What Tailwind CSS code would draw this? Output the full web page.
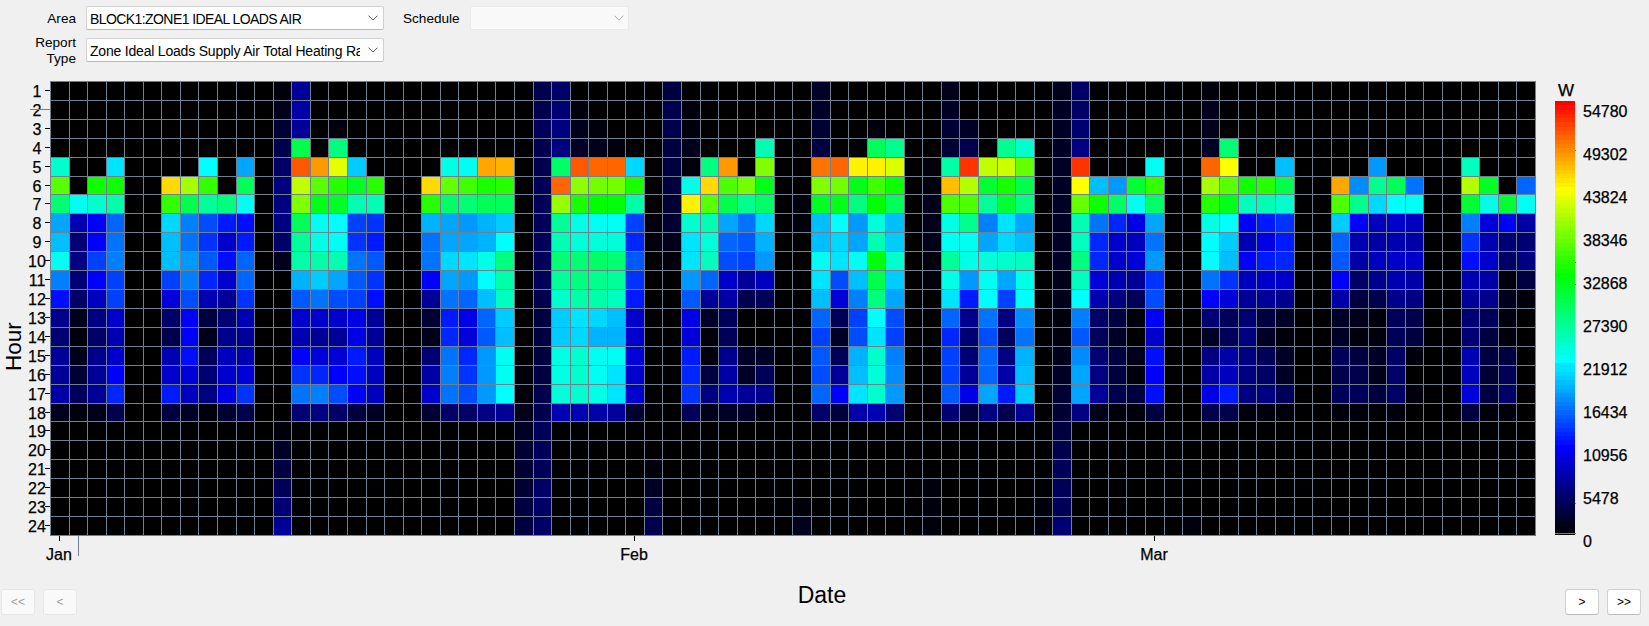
<!DOCTYPE html>
<html lang="en">
<head>
    <meta charset="UTF-8">
    <meta name="viewport" content="width=device-width, initial-scale=1.0">
    <title>Hourly Heating Rate</title>
    <script src="https://cdn.jsdelivr.net/npm/@tailwindcss/browser@4"></script>
    <style>
        body {
            font-family: "Liberation Sans", Arial, sans-serif;
        }
    </style>
</head>
<body class="bg-[#f0f0f0] text-black w-[1649px] h-[626px] overflow-hidden flex flex-col">

    <!-- Filters -->
    <header class="h-[81px] shrink-0 flex items-start pt-[6px] text-[13.6px] leading-[16px]">
        <div class="w-[76px] text-right flex flex-col">
            <label class="h-6 leading-[25px]">Area</label>
            <label class="mt-[5px] pl-[30px]">Report Type</label>
        </div>
        <div class="ml-[10px] w-[298px] flex flex-col gap-2">
            <div class="h-6 bg-white border border-[#d0d0d0] border-b-[#b8b8b8] rounded-[2px] flex items-center pl-[3px] pr-[5px]">
                <span class="flex-1 pt-px overflow-hidden whitespace-nowrap text-[14px] tracking-[-0.58px]">BLOCK1:ZONE1 IDEAL LOADS AIR</span>
                <svg class="w-[10px] h-[6px]" viewBox="0 0 10 6" fill="none" stroke="#555" stroke-width="1"><path d="M0.6 0.7 5 5.1 9.4 0.7"/></svg>
            </div>
            <div class="h-6 bg-white border border-[#d0d0d0] border-b-[#b8b8b8] rounded-[2px] flex items-center pl-[3px] pr-[5px]">
                <span class="w-[270px] pt-px overflow-hidden whitespace-nowrap text-[14px] tracking-[-0.2px]">Zone Ideal Loads Supply Air Total Heating Rate</span>
                <svg class="ml-auto w-[10px] h-[6px] shrink-0" viewBox="0 0 10 6" fill="none" stroke="#555" stroke-width="1"><path d="M0.6 0.7 5 5.1 9.4 0.7"/></svg>
            </div>
        </div>
        <label class="ml-[19px] w-[67px] h-6 leading-[25px]">Schedule</label>
        <div class="w-[159px] h-6 bg-[#f9f9f9] border border-[#e9e9e9] rounded-[2px] flex items-center justify-end pr-[4px]">
            <svg class="w-[10px] h-[6px]" viewBox="0 0 10 6" fill="none" stroke="#aaa" stroke-width="1"><path d="M0.6 0.7 5 5.1 9.4 0.7"/></svg>
        </div>
    </header>

    <!-- Chart -->
    <main class="h-[455px] shrink-0 flex">
        <div class="w-[27px] flex items-start justify-center pt-[240px]">
            <span class="[writing-mode:vertical-rl] rotate-180 text-[22.5px] leading-[25px] h-[50px]">Hour</span>
        </div>
        <div id="hours" class="relative w-[23px] grid text-[16px] leading-none [-webkit-text-stroke:0.25px_black]"></div>
        <div id="heatmap" class="w-[1486px] grid border-r border-b border-[#708090] bg-black"></div>
        <div class="relative ml-[19px] w-5 pt-5">
            <div class="absolute top-0 left-0 w-[22px] text-center text-[17px] leading-5 [-webkit-text-stroke:0.25px_black]">W</div>
            <div id="scale" class="h-[434px] flex flex-col"></div>
            <div class="absolute top-[452px] left-0 w-[21px] h-px bg-[#708090]"></div>
            <i class="absolute top-[69px] left-5 size-px bg-[#708090]"></i>
            <i class="absolute top-[181px] left-5 size-px bg-[#708090]"></i>
            <i class="absolute top-[203px] left-5 size-px bg-[#708090]"></i>
            <i class="absolute top-[422px] left-5 size-px bg-[#708090]"></i>
        </div>
        <div id="scaleLabels" class="ml-2 pt-[9px] text-[16px] leading-[43px] flex flex-col [-webkit-text-stroke:0.25px_black]"></div>
    </main>

    <!-- Months -->
    <div class="relative h-[53px] shrink-0 pl-[50px]">
        <div id="months" class="w-[1485px] grid text-[16px] leading-none [-webkit-text-stroke:0.25px_black]"></div>
        <div class="absolute left-[78px] top-0 w-px h-5 bg-[#708090]"></div>
        <div class="absolute left-0 top-[46px] w-[1644px] text-center text-[23px] leading-[26px]">Date</div>
    </div>

    <!-- Pager -->
    <footer class="flex text-[12px] leading-none pl-px pr-[8px]">
        <button class="w-[34px] h-[26px] bg-[#f9f9f9] border border-[#e6e6e6] rounded-[3px] text-[#a0a0a0]">&lt;&lt;</button>
        <button class="ml-[8px] w-[34px] h-[26px] bg-[#f9f9f9] border border-[#e6e6e6] rounded-[3px] text-[#a0a0a0]">&lt;</button>
        <button class="ml-auto w-[34px] h-[26px] bg-white border border-[#d0d0d0] border-b-[#bbb] rounded-[3px]">&gt;</button>
        <button class="ml-[8px] w-[34px] h-[26px] bg-white border border-[#d0d0d0] border-b-[#bbb] rounded-[3px]">&gt;&gt;</button>
    </footer>

    <script>
        // day index: [[first hour, levels 0-100 ...], ...]
        const days = {
            0: [[5, 44,67,51,33,35,41,30,21,11,9,12,12,13,2]],
            1: [[7, 41,14,9,10,9,8,2,1,2,4,7,1]],
            2: [[6, 61,44,20,20,25,20,15,10,8,11,12,12,2]],
            3: [[5, 38,61,47,28,29,30,25,25,16,14,16,20,23,6]],
            6: [[6, 83,64,37,35,35,25,17,8,6,14,16,22,5]],
            7: [[6, 73,54,30,29,32,30,26,20,20,21,17,15,3]],
            8: [[5, 40,64,48,26,24,27,23,14,5,2,7,9,10,1]],
            9: [[7, 50,22,16,21,16,12,9,11,15,16,18,4]],
            10: [[5, 33,53,41,21,22,28,28,24,14,12,14,17,24,6]],
            12: [[1, 1,2,4,6,8,10,10,10,8,2], [19, 1,3,5,7,9,12]],
            13: [[1, 12,13,12,54,93,75,70,53,48,47,34,27,16,14,20,24,29,9]],
            14: [[5, 88,67,58,41,42,47,36,29,16,12,17,23,30,10]],
            15: [[3, 1,50,78,63,57,40,41,46,33,26,16,12,17,20,26,8]],
            16: [[5, 36,57,46,25,24,29,27,25,18,18,22,21,20,5]],
            17: [[6, 63,46,24,22,27,24,21,12,12,15,15,15,3]],
            20: [[6, 83,63,34,29,29,20,12,4,2,9,13,16,4]],
            21: [[5, 42,68,52,33,33,37,33,29,22,23,29,30,29,8]],
            22: [[5, 41,65,51,32,33,38,32,28,18,17,23,24,26,8]],
            23: [[5, 87,62,53,34,34,42,40,35,28,27,32,32,32,10]],
            24: [[5, 86,63,53,36,40,50,47,45,36,35,41,41,40,12]],
            25: [[16, 1,1,2,3,4,4,4,5,5]],
            26: [[1, 6,6,7,6,6,7,7,7,7,7,7,6,5,5,5,5,6,6,7,7,7,8,8,8]],
            27: [[1, 8,9,10,10,52,92,72,48,46,51,48,44,36,36,42,42,43,14]],
            28: [[2, 1,2,3,93,71,62,42,43,51,50,47,38,37,44,44,44,14]],
            29: [[3, 1,2,92,69,60,41,43,52,49,47,37,34,41,41,42,13]],
            30: [[4, 1,92,69,59,41,43,51,48,45,35,34,41,38,38,12]],
            31: [[5, 37,62,47,25,23,27,24,22,16,16,17,16,16,4]],
            32: [[8, 1,1], [21, 1,3,5,6]],
            33: [[1, 5,6,6,5,5,5,4,4,2,1]],
            34: [[2, 1,1,2,1,42,81,44,38,38,32,27,18,17,22,23,24,7]],
            35: [[5, 50,83,67,46,43,45,28,12,3,1,1,5,10,2]],
            36: [[5, 88,66,54,33,28,26,16,13,7,7,11,13,14,3]],
            37: [[6, 69,49,29,27,25,12,6,0,0,3,3,12,3]],
            38: [[4, 46,70,58,52,37,34,32,15,7,0,0,3,7,11,1]],
            40: [[7, 1,1], [23, 1,2]],
            41: [[1, 3,3,4,5,91,70,57,35,35,41,38,35,28,25,27,26,28,8]],
            42: [[5, 92,69,58,40,37,38,26,17,7,3,7,12,20,5]],
            43: [[5, 81,58,50,32,33,41,35,30,25,26,34,35,38,13]],
            44: [[3, 1,53,81,65,60,43,46,59,54,50,40,38,44,43,44,14]],
            45: [[4, 49,77,61,53,35,36,44,36,33,26,25,30,31,32,9]],
            47: [[5, 1,1,2,2,2,1,1], [22, 1,1,1]],
            48: [[1, 2,3,4,4,47,85,66,42,41,48,42,38,28,23,25,25,27,9]],
            49: [[3, 3,6,96,74,66,49,41,42,32,22,11,9,9,12,18,5]],
            50: [[5, 75,56,48,30,33,43,41,40,29,26,28,28,33,10]],
            51: [[4, 49,76,62,56,38,37,44,33,25,10,7,10,13,22,6]],
            52: [[4, 44,68,54,50,33,35,45,42,40,31,29,34,35,36,12]],
            53: [[23, 1,1]],
            54: [[1, 2,3,3,3,3,3,3,3,3,3,2,2,1,1,2,3,4,4,5,6,7,7,7,9]],
            55: [[1, 8,8,9,10,96,80,68,46,45,50,45,40,30,27,31,33,33,10]],
            56: [[6, 35,61,29,23,23,17,14,8,7,9,10,12,2]],
            57: [[6, 32,52,23,16,16,14,10,5,3,5,5,6,1]],
            58: [[6, 56,41,18,15,17,12,7,1,0,2,1,5,1]],
            59: [[5, 41,64,52,33,29,32,24,26,20,16,21,20,21,5]],
            61: [[24, 1]],
            62: [[1, 1,2,2,3,92,73,63,42,40,40,29,20,9,3,10,13,18,6]],
            63: [[4, 51,80,67,58,40,36,35,24,17,7,7,13,15,22,6]],
            64: [[6, 61,45,20,14,20,15,12,9,10,10,10,10,1]],
            65: [[6, 63,46,22,18,22,16,12,5,3,7,8,10,1]],
            66: [[5, 35,54,44,24,22,23,16,11,3,1,3,3,7,1]],
            69: [[6, 87,66,36,28,27,20,13,3,3,7,6,7,1]],
            70: [[6, 31,49,20,14,13,8,5,2,1,5,6,7,1]],
            71: [[5, 32,49,37,15,13,15,11,6,1,1,3,2,5]],
            72: [[6, 53,40,16,14,16,14,11,7,7,8,8,8,1]],
            73: [[6, 29,41,15,13,16,13,10,6,5,1,0,1]],
            76: [[5, 45,74,56,30,24,21,14,12,9,9,14,15,17,5]],
            77: [[6, 57,42,17,14,16,13,11,7,5,5,4,5,1]],
            78: [[7, 56,20,9,8,1,2,1,1,5,7,8,1]],
            79: [[6, 28,41,13,9,10,5,1]]
        };

        // black > blue > cyan > green > yellow > red
        function levelColor(n) {
            const s = Math.round((n % 20) * 12.75);
            if (n >= 100) return 'rgb(255,0,0)';
            if (n >= 80) return `rgb(255,${255 - s},0)`;
            if (n >= 60) return `rgb(${s},255,0)`;
            if (n >= 40) return `rgb(0,255,${255 - s})`;
            if (n >= 20) return `rgb(0,${Math.min(s, 229)},255)`;
            return `rgb(0,0,${s})`;
        }

        // whole pixel tracks so the grid lines stay sharp
        function tracks(count, step) {
            const out = [];
            for (let i = 0; i < count; i++) {
                out.push(Math.round((i + 1) * step) - Math.round(i * step) + 'px');
            }
            return out.join(' ');
        }

        const columns = tracks(80, 18.56);
        const rows = tracks(24, 18.915);

        const values = Array.from({ length: 80 }, () => new Array(25).fill(0));
        for (const day in days) {
            for (const [start, ...levels] of days[day]) {
                levels.forEach((v, i) => values[day][start + i] = v);
            }
        }

        const heatmap = document.getElementById('heatmap');
        heatmap.style.gridTemplateColumns = columns;
        heatmap.style.gridTemplateRows = rows;
        let cells = '';
        for (let h = 1; h <= 24; h++) {
            for (let d = 0; d < 80; d++) {
                cells += `<div class="border-l border-t border-[#708090]" style="background:${levelColor(values[d][h])}"></div>`;
            }
        }
        heatmap.innerHTML = cells;

        const hours = document.getElementById('hours');
        hours.style.gridTemplateRows = rows;
        let hourHtml = '';
        for (let h = 1; h <= 24; h++) {
            hourHtml += `<div class="relative flex items-center justify-center pt-[3px] pr-[3px]"><span>${h}</span><i class="absolute right-0 top-[9px] w-[5px] h-px bg-black"></i></div>`;
        }
        hours.innerHTML = hourHtml + '<div class="absolute left-[3px] top-[28px] w-5 h-px bg-[#708090]"></div>';

        let scaleHtml = '';
        for (let n = 100; n >= 0; n--) {
            scaleHtml += `<div class="flex-1" style="background:${levelColor(n)}"></div>`;
        }
        document.getElementById('scale').innerHTML = scaleHtml;

        let labels = '';
        for (let i = 10; i >= 0; i--) {
            labels += `<span class="h-[43px] shrink-0">${i * 5478}</span>`;
        }
        document.getElementById('scaleLabels').innerHTML = labels;

        const months = document.getElementById('months');
        months.style.gridTemplateColumns = columns;
        [['Jan', 0], ['Feb', 31], ['Mar', 59]].forEach(([name, day]) => {
            months.innerHTML += `<div class="row-start-1 flex flex-col items-center" style="grid-column:${day + 1}"><i class="w-px h-[5px] bg-black"></i><span class="mt-[6px] mr-px">${name}</span></div>`;
        });
    </script>
</body>
</html>
